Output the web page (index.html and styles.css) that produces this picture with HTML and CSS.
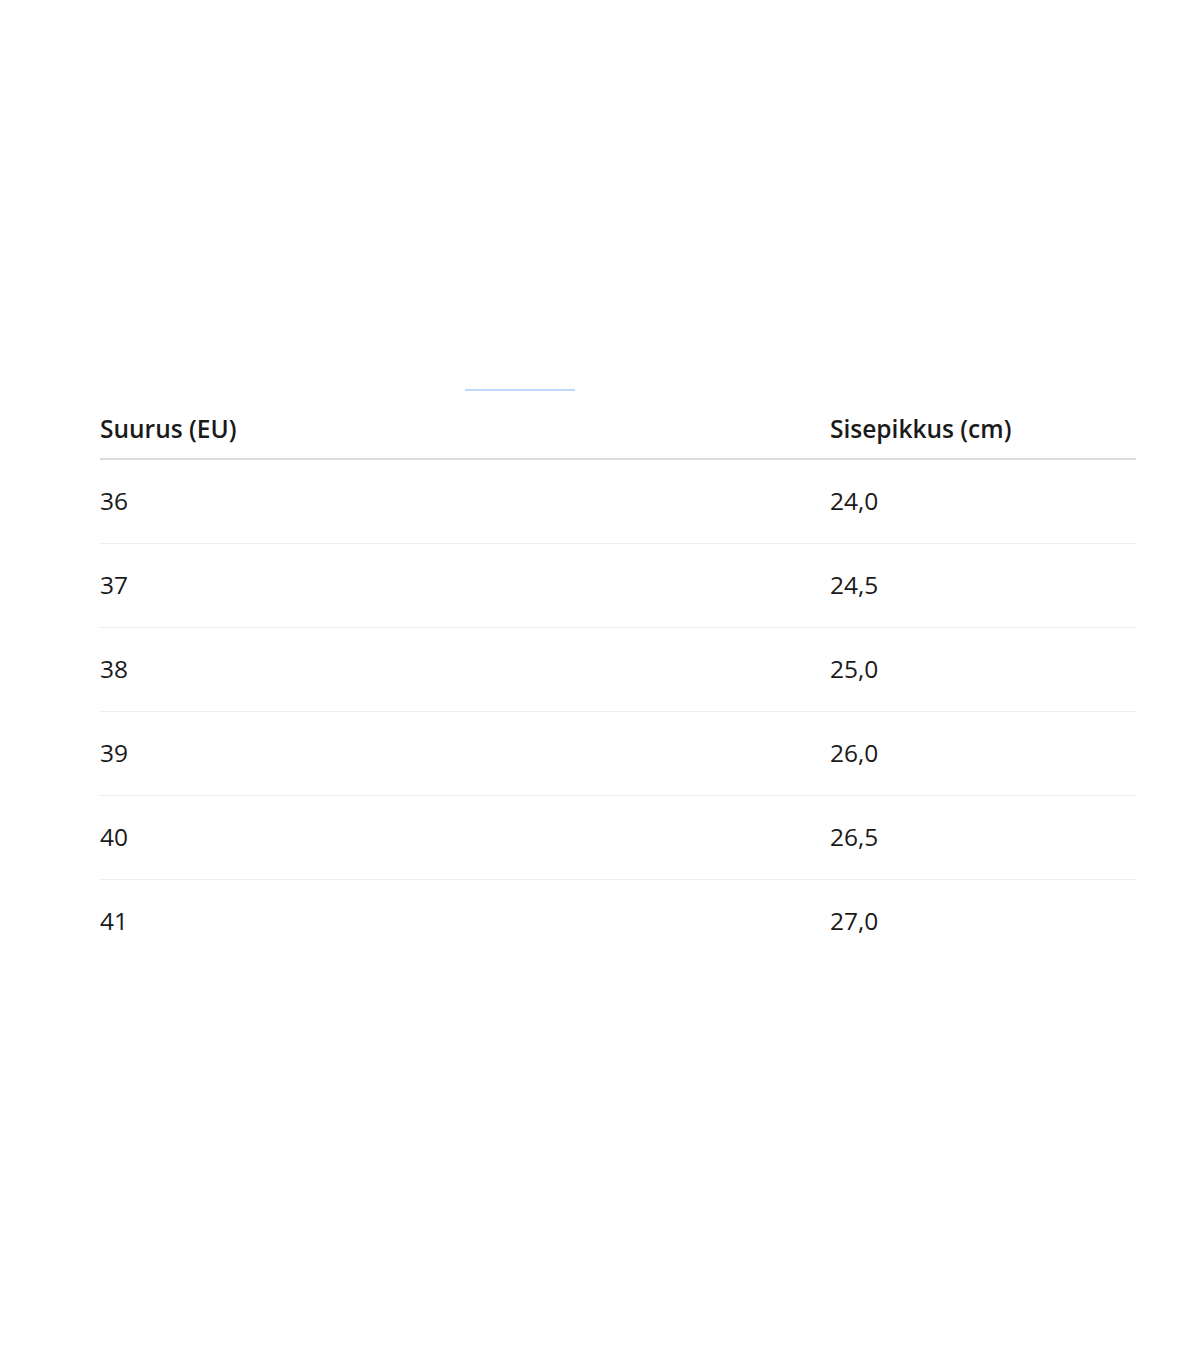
FILE: index.html
```html
<!DOCTYPE html>
<html lang="fi">
<head>
<meta charset="utf-8">
<title>Kokotaulukko</title>
<link rel="stylesheet" href="styles.css">
</head>
<body>
<main class="page">
  <div class="indicator"></div>
  <table class="size-table">
    <thead>
      <tr><th class="col-size">Suurus (EU)</th><th>Sisepikkus (cm)</th></tr>
    </thead>
    <tbody>
      <tr><td>36</td><td>24,0</td></tr>
      <tr><td>37</td><td>24,5</td></tr>
      <tr><td>38</td><td>25,0</td></tr>
      <tr><td>39</td><td>26,0</td></tr>
      <tr><td>40</td><td>26,5</td></tr>
      <tr><td>41</td><td>27,0</td></tr>
    </tbody>
  </table>
</main>
</body>
</html>
```
FILE: styles.css
```css
html, body {
  margin: 0;
  padding: 0;
  background: #ffffff;
}
body {
  font-family: "Open Sans", "Noto Sans", "Liberation Sans", sans-serif;
  color: #1a1a1a;
}
.page {
  width: 1036px;
  padding: 389px 0 0 100px;
}
.indicator {
  width: 110px;
  height: 2px;
  margin-left: 365px;
  background: #bcd9fb;
}
.size-table {
  width: 100%;
  border-collapse: collapse;
  margin-top: 7px;
}
.size-table th,
.size-table td {
  text-align: left;
  padding: 0;
  font-size: 24.5px;
  line-height: 30px;
}
.size-table th {
  font-weight: 600;
  padding: 16px 0 14px;
  border-bottom: 2px solid #dcdcdc;
}
.size-table th.col-size {
  width: 730px;
}
.size-table td {
  font-weight: 400;
  padding: 26px 0 27px;
  border-bottom: 1px solid #eeeeee;
}
.size-table tbody tr:last-child td {
  border-bottom: none;
}
```
